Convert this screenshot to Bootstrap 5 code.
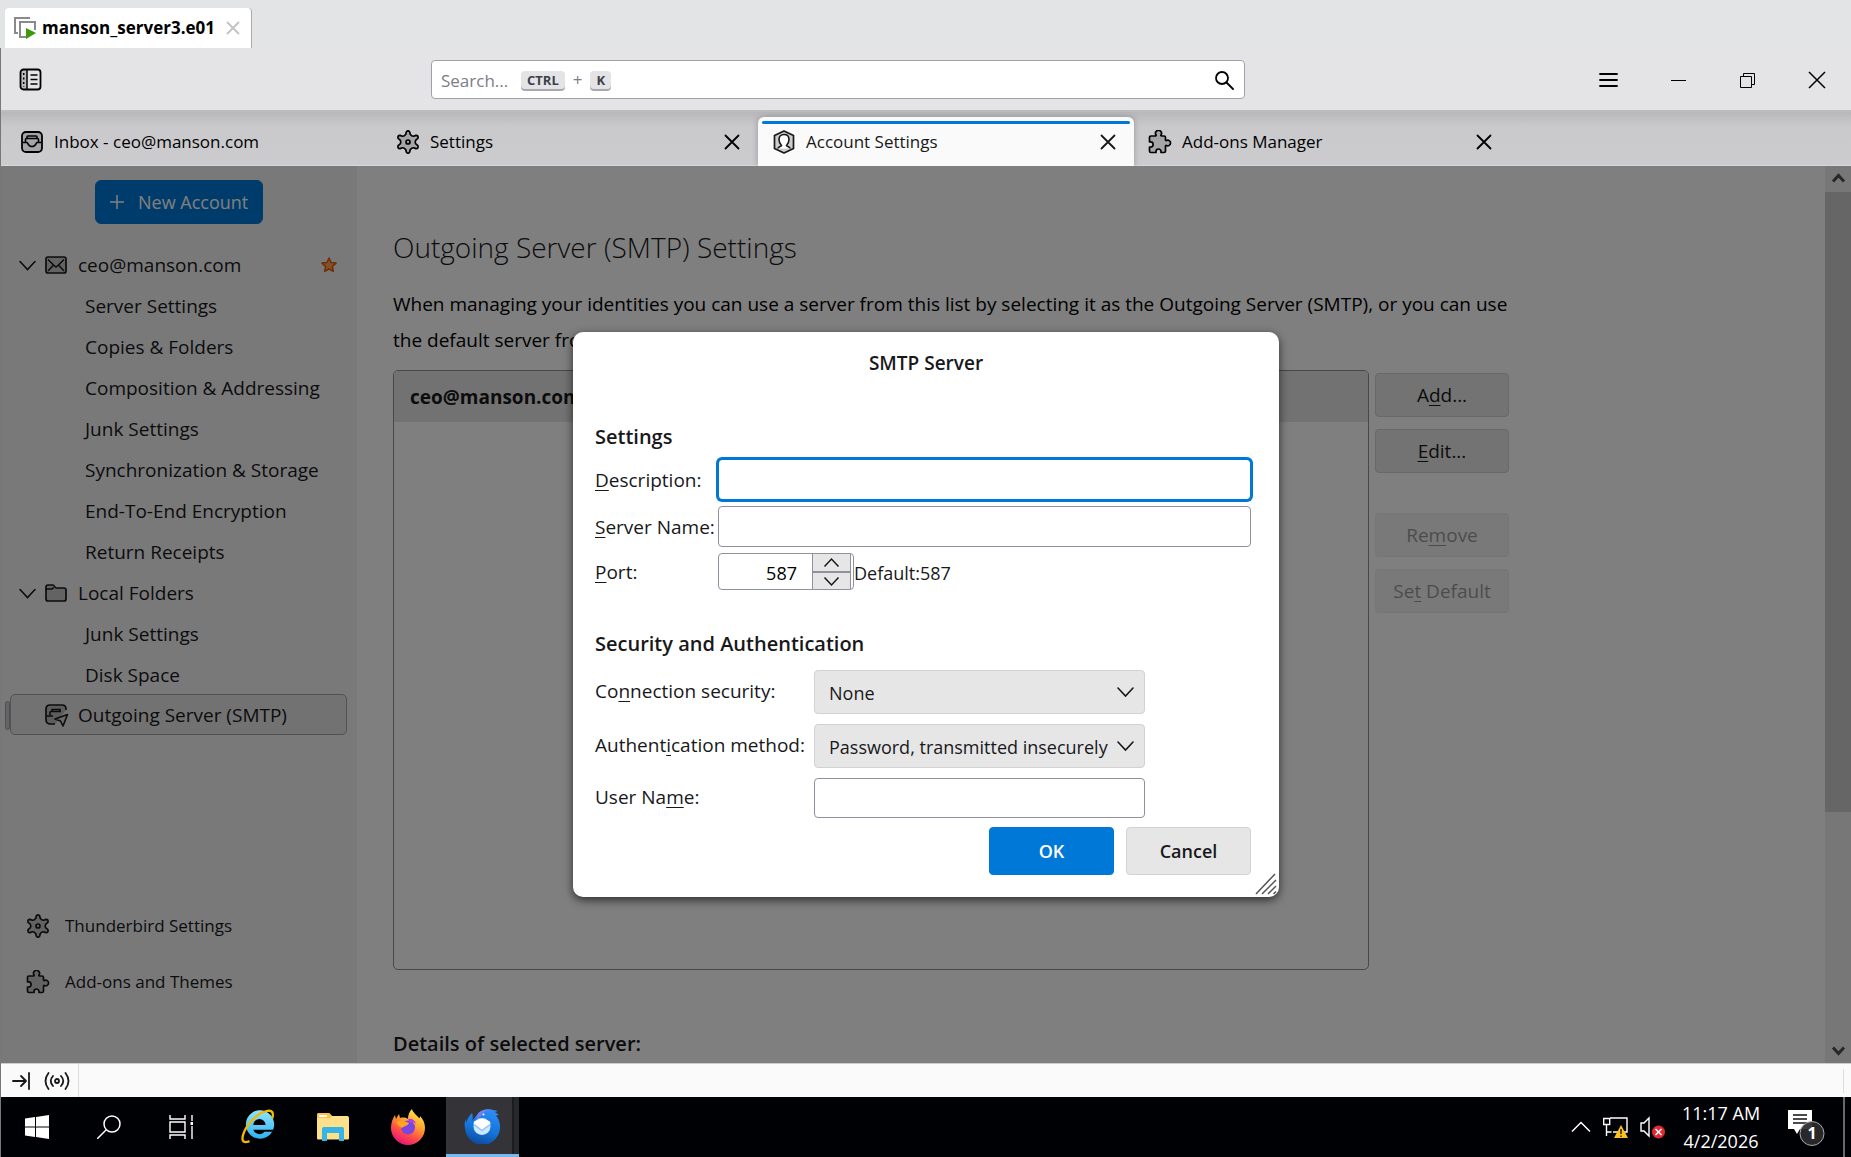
<!DOCTYPE html>
<html lang="en">
<head>
<meta charset="utf-8">
<meta name="viewport" content="width=device-width, initial-scale=1">
<title>manson_server3.e01</title>
<link href="https://cdn.jsdelivr.net/npm/bootstrap@5.3.0/dist/css/bootstrap.min.css" rel="stylesheet">
<style>
  body{font-family:"Open Sans","Noto Sans",sans-serif;font-size:19px;line-height:24px;color:#18181b;background:#e3e4e6;height:100vh;overflow:hidden}
  svg{display:block;flex:none}
  .ln{fill:none;stroke:currentColor;stroke-width:1.8;stroke-linecap:round;stroke-linejoin:round}
  .soft{fill:rgba(0,0,0,.18)}
  .plain{background:none;border:0;padding:0;color:inherit}
  u{text-underline-offset:3px;text-decoration-thickness:1px}

  /* console tab strip */
  .vm-strip{height:48px;padding:8px 5px 0}
  .vm-tab{width:247px;height:40px;background:#fff;border-right:1px solid #aaa;border-radius:4px 4px 0 0;padding:0 11px 0 9px;font-size:17px;font-weight:700;color:#000}
  .vm-tab span{margin-left:6px}
  .guest{border-left:1px solid #777}

  /* toolbar */
  .toolbar{height:64px;background:#e4e4e6;border-bottom:2px solid #bcbcbf;padding:1px 25px 0 18px;color:#000}
  .spaces{width:58px}
  .search-box{width:814px;height:39px;background:#fff;border:1px solid #a1a1aa;border-radius:4px;padding:0 10px 0 9px}
  .search-box input{border:0;outline:0;width:80px;padding:2px 0 0;font-size:17px;color:#18181b}
  .search-box input::placeholder{color:#7d7d85;opacity:1}
  .search-box kbd{background:#e4e4e7;color:#3f3f46;font:700 13px/18px "Open Sans",sans-serif;padding:0 6px;border-radius:4px;box-shadow:0 2px 0 #a8a8ae}
  .search-box .plus{font-size:17px;color:#7d7d85}
  .win-btns{gap:52px}

  /* mail tabs */
  .tab-bar{height:54px;background:linear-gradient(#b8b8bb,#c9c9cc 14px,#cccccf);border-bottom:1px solid #d8d8da;padding-left:5px;font-size:17px}
  .mail-tab{width:376px;height:49px;margin-top:5px;padding:0 18px 0 14px;color:#000}
  .mail-tab a{color:inherit;text-decoration:none;gap:10px}
  .mail-tab.current{background:#fafafa;border-radius:6px 6px 0 0;box-shadow:0 0 6px rgba(0,0,0,.25);color:#18181b}
  .mail-tab.current::before{content:"";position:absolute;left:4px;right:4px;top:4px;height:3px;border-radius:2px;background:#0078d7}

  /* settings page */
  .page-area{background:#fff}
  .side{width:356px;background:#f3f3f4;color:#18181b}
  .new-acc{width:168px;height:44px;background:#0078d7;border-color:#0078d7;color:#fff;font-size:18px;line-height:24px;padding:0 14px;margin:14px 0 0 94px;gap:14px}
  .tree{margin-top:19px}
  .tree a{height:41px;color:inherit;text-decoration:none;padding:3px 20px 0 84px}
  .tree a.top{padding-left:18px}
  .tree a.top .ico{margin:0 11px 0 9px}
  .tree a.sel{margin:0 10px 0 9px;padding:0 0 0 34px;background:#e4e4e5;border:1px solid #a2a2a6;border-radius:5px}
  .tree a.sel .ico{margin:0 9px 0 0}
  .tree a.sel::before{content:"";position:absolute;left:-6px;top:6px;width:5px;height:29px;border:1px solid #a2a2a6;border-radius:3px;background:#c8c8cc}
  .foot-links{margin-bottom:53px}
  .foot-links a{height:56px;padding-left:25px;gap:15px;color:inherit;text-decoration:none;font-size:17px}

  .main-pane{padding:61px 0 0 36px;overflow:hidden}
  .pane-in{width:1116px}
  .pane-in h1{font-size:28px;line-height:40px;font-weight:300;margin:0}
  .pane-in p{line-height:36px;margin:19px 0 12px;color:#000}
  .server-list{height:600px;border:1px solid #8f8f9d;border-radius:5px;overflow:hidden}
  .server-list li{height:51px;background:#e5e5e5;padding:1px 16px 0;font-weight:700}
  .side-btns{width:134px;margin:3px 0 0 6px;gap:12px}
  .side-btns .btn,.soft-btn{height:44px;background:#e6e6e6;border:1px solid #d2d2d2;border-radius:4px;color:#18181b;font-size:19px;line-height:24px;padding:0}
  .side-btns .btn:disabled{opacity:.45}
  .side-btns .apart{margin-top:28px}
  .pane-in h2,.dlg h2{font-size:20px;line-height:28px;font-weight:600;margin:0}
  .pane-in h2{margin-top:60px}

  .scroller{width:26px;background:#efefef;color:#505050}
  .scroller i{height:620px;background:#cdcdcd}

  /* modal */
  .dim{background:rgba(0,0,0,.5)}
  .dlg{width:706px;background:#fff;border-radius:10px;box-shadow:0 3px 10px rgba(0,0,0,.65);padding:19px 28px 22px 22px}
  .dlg-title{font-weight:600;margin-left:6px}
  .fields{display:grid;grid-template-columns:118px 1fr;column-gap:5px;row-gap:6px;align-items:center;white-space:nowrap}
  .fields.auth{grid-template-columns:208px 331px;column-gap:11px;row-gap:10px;margin-top:12px}
  .fields.auth label{padding-bottom:3px}
  .fields .form-control,.fields .form-select{border:1px solid #8f8f9d;border-radius:4px;font-size:18px;line-height:24px;color:#18181b;padding:0 12px}
  .fields .form-control{height:41px}
  .fields.auth .form-control{height:40px}
  .fields .form-control.on{border-color:#0078d7;box-shadow:0 0 0 2px #0078d7}
  .fields .form-select{height:44px;background-color:#e6e6e6;border-color:#d2d2d2;padding:2px 30px 0 14px;background-position:right 10px center;background-size:17px 17px;background-image:url("data:image/svg+xml,%3Csvg xmlns='http://www.w3.org/2000/svg' viewBox='0 0 17 17' fill='none' stroke='%2318181b' stroke-width='1.6' stroke-linecap='round'%3E%3Cpath d='M1 4l7.5 8L16 4'/%3E%3C/svg%3E")}
  .port-box{width:136px;height:37px;border:1px solid #8f8f9d;border-radius:4px;background:#fff;padding-right:2px}
  .port-box input{width:93px;border:0;outline:0;padding:2px 15px 0 0;text-align:right;background:none;font-size:18px}
  .spin{width:40px;border:solid #8f8f9d;border-width:0 1px}
  .spin button{background:#e6e6e6;height:17px}
  .spin button+button{border-top:2px solid #8f8f9d;height:18px}
  .default-port{font-size:18px;padding-top:2px}
  .dlg .sec{margin-top:40px}
  .acts{margin-top:9px;gap:12px}
  .dlg-ok,.soft-btn.dlg-cancel{width:125px;height:48px;font-size:18px;font-weight:600}
  .dlg-ok{background:#0078d7;border-color:#0078d7;color:#fff;border-radius:4px}
  .grip{right:2px;bottom:2px;color:#555}

  .status{height:34px;background:#fafafa;border-top:1px solid #ccc;color:#18181b}
  .status .seg{width:78px;border-right:1px solid #ddd;padding-left:11px;gap:14px}
  .status .end{width:8px;height:24px;border-left:1px solid #ddd}

  .taskbar{height:60px;background:#000105;color:#fff}
  .taskbar .sys{width:72px}
  .taskbar .app{width:75px;padding-right:2px}
  .taskbar .running{width:73px;background:#343438;border-bottom:3px solid #76b9ed;padding-right:1px}
  .taskbar .running::after{content:"";position:absolute;right:0;top:0;bottom:0;width:7px;border-left:2px solid #1c1c1f;background:#27282b}
  .clock{font-size:18px;line-height:28px;width:86px;text-align:center}
  .tray{gap:12px}
  .note{margin:0 18px 0 12px}
  .peek{width:8px;border-left:2px solid #66686c}
</style>
</head>
<body class="d-flex flex-column">

<svg width="0" height="0" class="position-absolute" aria-hidden="true">
  <symbol id="gear" viewBox="0 0 24 24"><path class="soft" stroke="currentColor" stroke-width="1.7" stroke-linejoin="round" d="M9.800 4.300 10.300 2Q12-.4 13.700 2l.5 2.300q1.700 2.200 3.400 1.900l2.300-.8q2.700-.1 2 2.900l-2.100 1.800q-1.100 1.900 0 3.800l2.100 1.800q.7 3-2 2.900l-2.300-.8q-1.700-.3-3.400 1.900l-.5 2.300q-1.700 2.400-3.400 0l-.5-2.300q-1.700-2.200-3.400-1.900l-2.300.8q-2.700.1-2-2.900l2.100-1.800q1.100-1.900 0-3.800L2.100 8.300q-.7-3 2-2.900l2.300.8q1.700.3 3.400-1.900z"/><circle cx="12" cy="12" r="2" fill="none" stroke="currentColor" stroke-width="1.7"/></symbol>
  <symbol id="puzzle" viewBox="0 0 24 24"><path class="soft" stroke="currentColor" stroke-width="1.7" stroke-linejoin="round" d="M3 6h4.500c.6 0 .8-.5.5-1a3 3 0 1 1 5 0c-.3.5-.1 1 .5 1H16c1 0 1.500.5 1.500 1.500V10c0 .6.500.8 1 .5a2.800 2.800 0 1 1 0 5c-.5-.3-1-.1-1 .5v5c0 1-.5 1.500-1.500 1.500h-3v-1a2.500 2.500 0 0 0-5 0v1H3c-1 0-1.500-.5-1.500-1.500v-4h1a2.600 2.600 0 0 0 0-5.200h-1V7.500C1.500 6.500 2 6 3 6z"/></symbol>
  <symbol id="cross" viewBox="0 0 16 16"><path class="ln" d="M1.500 1.500l13 13M14.500 1.500l-13 13"/></symbol>
  <symbol id="down" viewBox="0 0 17 17"><path fill="none" stroke="currentColor" stroke-width="1.6" stroke-linecap="round" d="M1 4.500l7.500 8 7.500-8"/></symbol>
</svg>

<header class="vm-strip">
  <div class="vm-tab d-flex align-items-center">
    <svg width="22" height="22" viewBox="0 0 22 22"><path d="M16 1H1v15h3" fill="none" stroke="#8a8a8a" stroke-width="2"/><path d="M12 20H6V5h15v8" fill="none" stroke="#8a8a8a" stroke-width="2"/><path d="M12 11l10 5-10 6z" fill="#3c9a0a"/></svg>
    <span>manson_server3.e01</span>
    <button class="plain ms-auto" aria-label="Close machine tab"><svg width="14" height="14" viewBox="0 0 14 14"><path d="M1 1l12 12M13 1L1 13" stroke="#c4c4c4" stroke-width="2"/></svg></button>
  </div>
</header>

<div class="guest d-flex flex-column flex-grow-1">
  <div class="toolbar d-flex align-items-center">
    <button class="plain spaces" aria-label="Spaces toolbar"><svg width="23" height="23" viewBox="0 0 23 23"><path class="soft" d="M2 2h6v19H2z"/><rect class="ln" x="1.500" y="1.500" width="20" height="20" rx="3"/><path d="M8 2v19M11.500 7h7M11.500 11.500h7M11.500 16h7" stroke="currentColor" stroke-width="1.500"/><path d="M4.700 5v14" stroke="currentColor" stroke-width="1.500" stroke-dasharray="2 2.500"/></svg></button>
    <form class="search-box d-flex align-items-center mx-auto" role="search">
      <input type="text" placeholder="Search..." aria-label="Search">
      <kbd>CTRL</kbd><span class="plus mx-2">+</span><kbd>K</kbd>
      <button type="button" class="plain ms-auto" aria-label="Run search"><svg width="19" height="20" viewBox="0 0 19 20"><circle class="ln" cx="7" cy="8" r="6"/><path class="ln" d="M11.500 12.500l6.500 6.500"/></svg></button>
    </form>
    <div class="win-btns d-flex align-items-center">
      <button class="plain" aria-label="Menu"><svg width="19" height="18" viewBox="0 0 19 18"><path class="ln" d="M1 3h17M1 9h17M1 15h17"/></svg></button>
      <button class="plain" aria-label="Minimize"><svg width="17" height="18" viewBox="0 0 17 18"><path d="M1 9.500h15" stroke="#000"/></svg></button>
      <button class="plain" aria-label="Restore"><svg width="17" height="18" viewBox="0 0 17 18"><path d="M1.500 5.500h11v11h-11zM4.500 5V2.500h11v11H13" fill="none" stroke="#000"/></svg></button>
      <button class="plain" aria-label="Close"><svg width="18" height="18" viewBox="0 0 18 18"><path d="M1 1l16 16M17 1L1 17" stroke="#000" stroke-width="1.500"/></svg></button>
    </div>
  </div>

  <nav class="tab-bar d-flex" aria-label="Open tabs">
    <div class="mail-tab d-flex align-items-center justify-content-between">
      <a href="#" class="d-flex align-items-center"><svg width="24" height="24" viewBox="0 0 24 24"><rect class="soft" x="2" y="2" width="20" height="20" rx="4" stroke="currentColor" stroke-width="1.800"/><path d="M2.500 12.500H7c1 0 1 4 5 4s4-4 5-4h4.500M5.500 12V9.500c0-.7.500-1 1-1h11c.6 0 1 .3 1 1V12M7 8.500V7c0-.6.300-1 1-1h8c.6 0 1 .4 1 1v1.500" fill="none" stroke="currentColor" stroke-width="1.600"/></svg>Inbox - ceo@manson.com</a>
    </div>
    <div class="mail-tab d-flex align-items-center justify-content-between">
      <a href="#" class="d-flex align-items-center"><svg width="24" height="24"><use href="#gear"/></svg>Settings</a>
      <button class="plain" aria-label="Close Settings"><svg width="16" height="16"><use href="#cross"/></svg></button>
    </div>
    <div class="mail-tab current position-relative d-flex align-items-center justify-content-between">
      <a href="#" class="d-flex align-items-center" aria-current="page"><svg width="24" height="24" viewBox="0 0 24 24"><path class="soft" stroke="currentColor" stroke-width="1.700" stroke-linejoin="round" d="M12 1l9.500 4.500v13L12 23l-9.500-4.500v-13z"/><path d="M6 18.500c0-2 2.500-1.500 3.500-3C8 14 7 12 7 9.500 7 6.500 9 4.500 12 4.500s5 2 5 5c0 2.500-1 4.500-2.500 6 1 1.500 3.500 1 3.500 3" fill="#fff" stroke="currentColor" stroke-width="1.600"/></svg>Account Settings</a>
      <button class="plain" aria-label="Close Account Settings"><svg width="16" height="16"><use href="#cross"/></svg></button>
    </div>
    <div class="mail-tab d-flex align-items-center justify-content-between">
      <a href="#" class="d-flex align-items-center"><svg width="24" height="24"><use href="#puzzle"/></svg>Add-ons Manager</a>
      <button class="plain" aria-label="Close Add-ons Manager"><svg width="16" height="16"><use href="#cross"/></svg></button>
    </div>
  </nav>

  <div class="page-area position-relative d-flex flex-grow-1 overflow-hidden">
    <aside class="side d-flex flex-column flex-shrink-0">
      <button class="btn new-acc d-flex align-items-center text-nowrap"><svg width="14" height="14" viewBox="0 0 14 14"><path d="M7 0v14M0 7h14" stroke="currentColor" stroke-width="1.500"/></svg>New Account</button>
      <nav class="tree d-flex flex-column text-nowrap" aria-label="Accounts">
        <a href="#" class="top d-flex align-items-center"><svg width="17" height="17"><use href="#down"/></svg><svg class="ico" width="22" height="22" viewBox="0 0 22 22"><rect class="soft" x="1" y="3" width="20" height="16" rx="2" stroke="currentColor" stroke-width="1.700"/><path d="M3 5.500l5.500 5.500L3 17M19 5.500L13.500 11l5.500 6M8.500 11l2.500 2 2.500-2" fill="none" stroke="currentColor" stroke-width="1.500"/></svg>ceo@manson.com<svg class="ms-auto" width="16" height="16" viewBox="0 0 16 16"><path d="M8 1l2.100 4.500 4.900.6-3.600 3.400.9 4.900L8 12l-4.300 2.400.9-4.900L1 6.100l4.900-.6z" fill="#ffa54f" stroke="#e8590c" stroke-width="1.500" stroke-linejoin="round"/></svg></a>
        <a href="#" class="d-flex align-items-center">Server Settings</a>
        <a href="#" class="d-flex align-items-center">Copies &amp; Folders</a>
        <a href="#" class="d-flex align-items-center">Composition &amp; Addressing</a>
        <a href="#" class="d-flex align-items-center">Junk Settings</a>
        <a href="#" class="d-flex align-items-center">Synchronization &amp; Storage</a>
        <a href="#" class="d-flex align-items-center">End-To-End Encryption</a>
        <a href="#" class="d-flex align-items-center">Return Receipts</a>
        <a href="#" class="top d-flex align-items-center"><svg width="17" height="17"><use href="#down"/></svg><svg class="ico" width="22" height="22" viewBox="0 0 22 22"><path class="soft" stroke="currentColor" stroke-width="1.700" stroke-linejoin="round" d="M1 5c0-1 .6-2 2-2h5c1.500 0 1.500 3 3.500 3H19c1.300 0 2 .7 2 2v9c0 1.300-.7 2-2 2H3c-1.300 0-2-.7-2-2z"/><path d="M1 7h5q1.500 0 2.500-1.500" fill="none" stroke="currentColor" stroke-width="1.500"/></svg>Local Folders</a>
        <a href="#" class="d-flex align-items-center">Junk Settings</a>
        <a href="#" class="d-flex align-items-center">Disk Space</a>
        <a href="#" class="sel position-relative d-flex align-items-center" aria-current="page"><svg class="ico" width="24" height="24" viewBox="0 0 24 24"><path d="M10 21H5c-2 0-4-1.500-4-4V6c0-3 2-4 4-4h12c3 0 4 2 4 4v1" class="soft" stroke="currentColor" stroke-width="1.700"/><path d="M2 13h6M5 12V9.500c0-.7.400-1 1-1h10M7 8V6.500h8V8" fill="none" stroke="currentColor" stroke-width="1.600"/><path d="M10 16l12.500-4.500L18 23l-2.500-5z" fill="#d4d4d4" stroke="currentColor" stroke-width="1.600" stroke-linejoin="round"/></svg>Outgoing Server (SMTP)</a>
      </nav>
      <nav class="foot-links mt-auto" aria-label="More settings">
        <a href="#" class="d-flex align-items-center"><svg width="24" height="24"><use href="#gear"/></svg>Thunderbird Settings</a>
        <a href="#" class="d-flex align-items-center"><svg width="24" height="24"><use href="#puzzle"/></svg>Add-ons and Themes</a>
      </nav>
    </aside>

    <main class="main-pane flex-grow-1">
      <div class="pane-in">
        <h1>Outgoing Server (SMTP) Settings</h1>
        <p>When managing your identities you can use a server from this list by selecting it as the Outgoing Server (SMTP), or you can use the default server from</p>
        <div class="d-flex">
          <ul class="server-list list-unstyled flex-grow-1 mb-0"><li class="d-flex align-items-center">ceo@manson.com</li></ul>
          <div class="side-btns d-flex flex-column">
            <button class="btn"><span>A<u>d</u>d...</span></button>
            <button class="btn"><span><u>E</u>dit...</span></button>
            <button class="btn apart" disabled><span>Re<u>m</u>ove</span></button>
            <button class="btn" disabled><span>Se<u>t</u> Default</span></button>
          </div>
        </div>
        <h2>Details of selected server:</h2>
      </div>
    </main>
    <div class="scroller d-flex flex-column flex-shrink-0 align-items-stretch">
      <svg width="26" height="26" viewBox="0 0 26 26"><path d="M8 15.500l5.500-6 5.500 6" fill="none" stroke="currentColor" stroke-width="3"/></svg>
      <i></i>
      <svg class="mt-auto" width="26" height="26" viewBox="0 0 26 26"><path d="M8 10.500l5.500 6 5.500-6" fill="none" stroke="currentColor" stroke-width="3"/></svg>
    </div>

    <div class="dim position-absolute top-0 start-0 w-100 h-100 d-flex align-items-center justify-content-center">
      <form class="dlg position-relative" role="dialog" aria-labelledby="dlgTitle">
        <div class="dlg-title text-center" id="dlgTitle">SMTP Server</div>
        <h2 class="mt-5">Settings</h2>
        <div class="fields mt-2">
          <label for="desc"><u>D</u>escription:</label>
          <input class="form-control on" id="desc" type="text">
          <label for="srv"><u>S</u>erver Name:</label>
          <input class="form-control" id="srv" type="text">
          <label for="port"><u>P</u>ort:</label>
          <div class="d-flex align-items-center">
            <div class="port-box d-flex align-items-stretch">
              <input id="port" type="text" inputmode="numeric" value="587">
              <div class="spin d-flex flex-column">
                <button type="button" class="plain d-flex justify-content-center align-items-center" aria-label="Increase"><svg width="17" height="11" viewBox="0 0 17 11"><path d="M1.500 9.500l7-7.500 7 7.500" fill="none" stroke="currentColor" stroke-width="1.500"/></svg></button>
                <button type="button" class="plain d-flex justify-content-center align-items-center" aria-label="Decrease"><svg width="17" height="11" viewBox="0 0 17 11"><path d="M1.500 1.500l7 7.500 7-7.500" fill="none" stroke="currentColor" stroke-width="1.500"/></svg></button>
              </div>
            </div>
            <span class="default-port">Default:587</span>
          </div>
        </div>
        <h2 class="sec">Security and Authentication</h2>
        <div class="fields auth">
          <label for="sec">Co<u>n</u>nection security:</label>
          <select class="form-select" id="sec"><option>None</option></select>
          <label for="auth">Authent<u>i</u>cation method:</label>
          <select class="form-select" id="auth"><option>Password, transmitted insecurely</option></select>
          <label for="user">User Na<u>m</u>e:</label>
          <input class="form-control" id="user" type="text">
        </div>
        <div class="acts d-flex justify-content-end">
          <button type="button" class="btn dlg-ok">OK</button>
          <button type="button" class="btn soft-btn dlg-cancel">Cancel</button>
        </div>
        <svg class="grip position-absolute" width="22" height="22" viewBox="0 0 22 22"><path d="M1 21L20 1M7 21L21 7M13 21l8-8M18.500 21l2.500-2.500" stroke="currentColor" stroke-width="1.500"/></svg>
      </form>
    </div>
  </div>

  <div class="status d-flex align-items-center">
    <div class="seg d-flex align-items-center h-100">
      <svg width="18" height="18" viewBox="0 0 18 18"><path class="ln" d="M1 9h13M9 4l5 5-5 5M17 1v16"/></svg>
      <svg width="26" height="18" viewBox="0 0 26 18"><circle class="ln" cx="13" cy="9" r="2"/><path class="ln" d="M4.500 1Q-1.500 9 4.500 17M21.500 1q6 8 0 16M9 4Q4.500 9 9 14M17 4q4.500 5 0 10"/></svg>
    </div>
    <div class="end ms-auto"></div>
  </div>

  <div class="taskbar d-flex">
    <button class="plain sys d-flex align-items-center justify-content-center" aria-label="Start"><svg width="24" height="24" viewBox="0 0 24 24"><path d="M0 3.500l10-1.400v9.400H0zM11 2L24 0v11.500H11zM0 12.500h10v9.400L0 20.500zM11 12.500h13V24l-13-2z" fill="#fff"/></svg></button>
    <button class="plain sys d-flex align-items-center justify-content-center" aria-label="Search Windows"><svg width="24" height="24" viewBox="0 0 24 24"><circle cx="15" cy="9" r="8" fill="none" stroke="#fff" stroke-width="1.500"/><path d="M9 15l-9 9" stroke="#fff" stroke-width="1.500"/></svg></button>
    <button class="plain sys d-flex align-items-center justify-content-center" aria-label="Task View"><svg width="24" height="24" viewBox="0 0 24 24"><path d="M1 0v4h15V0M1 24v-4h15v4M1 7h15v10H1zM23 0v6M23 11v13" fill="none" stroke="#fff" stroke-width="1.400"/><path d="M21.500 7h3v3h-3z" fill="#fff"/></svg></button>
    <button class="plain app d-flex align-items-center justify-content-center ms-1" aria-label="Internet Explorer"><svg width="34" height="36" viewBox="0 0 36 36"><defs><linearGradient id="ie" x1="0" y1="0" x2="0" y2="1"><stop offset="0" stop-color="#8fe6ff"/><stop offset="1" stop-color="#2fb2ee"/></linearGradient></defs><path d="M33 23H25a7 7 0 0 1-12-2h21A15 15 0 1 0 33 23zM13 16a6.500 6.500 0 0 1 13 0z" fill="url(#ie)" fill-rule="evenodd"/><path d="M33 9C35 3 33 0 28 1 17 3 5 16 2 27c-1.500 6 1 8.500 7 6" fill="none" stroke="#f5b800" stroke-width="2.500"/></svg></button>
    <button class="plain app d-flex align-items-center justify-content-center" aria-label="File Explorer"><svg width="32" height="28" viewBox="0 0 32 28"><path d="M0 2c0-1 .5-2 2-2h10l3 3h15c1 0 2 .5 2 2v20c0 1-.5 1.500-1.500 1.500h-29C.5 26.500 0 26 0 25z" fill="#ffe08a"/><path d="M0 2c0-1 .5-2 2-2h10l3 3-2 2H0z" fill="#fdc544"/><path d="M2 2h8v2H2z" fill="#fff"/><path d="M5 28V16c0-1.500 1-2 2-2h18c1 0 2 .5 2 2v12h-5v-8H10v8z" fill="#38b3e6"/></svg></button>
    <button class="plain app d-flex align-items-center justify-content-center" aria-label="Firefox"><svg width="34" height="36" viewBox="0 0 34 36"><defs><linearGradient id="ff" x1=".8" y1="0" x2=".3" y2="1"><stop offset="0" stop-color="#fff04a"/><stop offset=".4" stop-color="#ffa22e"/><stop offset=".7" stop-color="#ff4b45"/><stop offset="1" stop-color="#e0127f"/></linearGradient></defs><path d="M21 0c1 4 5 6 7 9 1 1 1-2 1-2 3 3 5 7 5 12a17 17 0 0 1-34 0C0 13 2 9 4 6l1 4 3-5 1 4c4-1 7 0 8 1 0-4 1-7 4-10z" fill="url(#ff)"/><circle cx="17" cy="18.500" r="7" fill="#7b45e0"/><path d="M5 13c5-2 9-1 13 1-1 3-5 3-7 5-2-1-5-3-6-6z" fill="#ffa51f"/><path d="M17 10c4-1 7 1 8 5-2-2-4-2-6-1z" fill="#b23cf0"/></svg></button>
    <button class="plain running position-relative d-flex align-items-center justify-content-center" aria-label="Thunderbird"><svg width="36" height="36" viewBox="0 0 36 36"><defs><linearGradient id="tb" x1=".7" y1="0" x2=".4" y2="1"><stop offset="0" stop-color="#2f8df5"/><stop offset=".6" stop-color="#1373d9"/><stop offset="1" stop-color="#0d4a9c"/></linearGradient></defs><path d="M13 7c3-5 9-7 16-5l5 1-3 1 4 3-3 .5c3 4 4 7 4 11A17.500 17.500 0 0 1 1 20c-1-4 0-7 1-9v4c1-4 3-7 6-10 1 3 1 5 0 8z" fill="url(#tb)"/><path d="M13 7c3-5 9-7 16-5-6 0-9 1-12 6l-5 4z" fill="#8a7df0" fill-opacity=".7"/><circle cx="18" cy="18.500" r="8.500" fill="#cfe8ff"/><path d="M10 13.500q8-5 16 0l.5 3-8.500 6-8.500-6z" fill="#fff"/><path d="M10 16.500l8 6 8-6" fill="none" stroke="#8cc4f5" stroke-width="1.500"/><circle cx="19.500" cy="6.500" r="1" fill="#fff"/></svg></button>

    <div class="tray ms-auto d-flex align-items-center">
      <svg width="20" height="14" viewBox="0 0 20 14"><path d="M1 11.500l9-9 9 9" fill="none" stroke="#fff" stroke-width="1.500"/></svg>
      <svg width="25" height="24" viewBox="0 0 25 24"><path d="M7 3h17v14H10M.7 3.500h6v6h-6zM3.500 9v12M3.500 17h5" fill="none" stroke="#fff" stroke-width="1.400"/><path d="M18 10l7 13H11z" fill="#fcc21b"/><path d="M18 14v5M18 20.500v1.500" stroke="#222" stroke-width="1.500"/></svg>
      <svg width="26" height="24" viewBox="0 0 26 24"><path d="M1 8h3l5-5v18l-5-5H1z" fill="none" stroke="#fff" stroke-width="1.400"/><circle cx="18.500" cy="17" r="6.500" fill="#e02a33"/><path d="M15.500 14l6 6M21.500 14l-6 6" stroke="#fff" stroke-width="1.500"/></svg>
      <div class="clock">11:17 AM<br>4/2/2026</div>
      <svg class="note" width="37" height="38" viewBox="0 0 37 38"><path d="M0 2h24v19H12l-3 5-3-5H0z" fill="#fff"/><path d="M5 7h14M5 11h14M5 15h14" stroke="#111" stroke-width="1.400"/><circle cx="24" cy="25.500" r="12" fill="#2b2b2d" fill-opacity=".93" stroke="#aaa"/><text x="24" y="31" text-anchor="middle" font-family="Open Sans" font-size="16" font-weight="700" fill="#fff">1</text></svg>
    </div>
    <div class="peek"></div>
  </div>
</div>

<script src="https://cdn.jsdelivr.net/npm/bootstrap@5.3.0/dist/js/bootstrap.bundle.min.js"></script>
</body>
</html>
